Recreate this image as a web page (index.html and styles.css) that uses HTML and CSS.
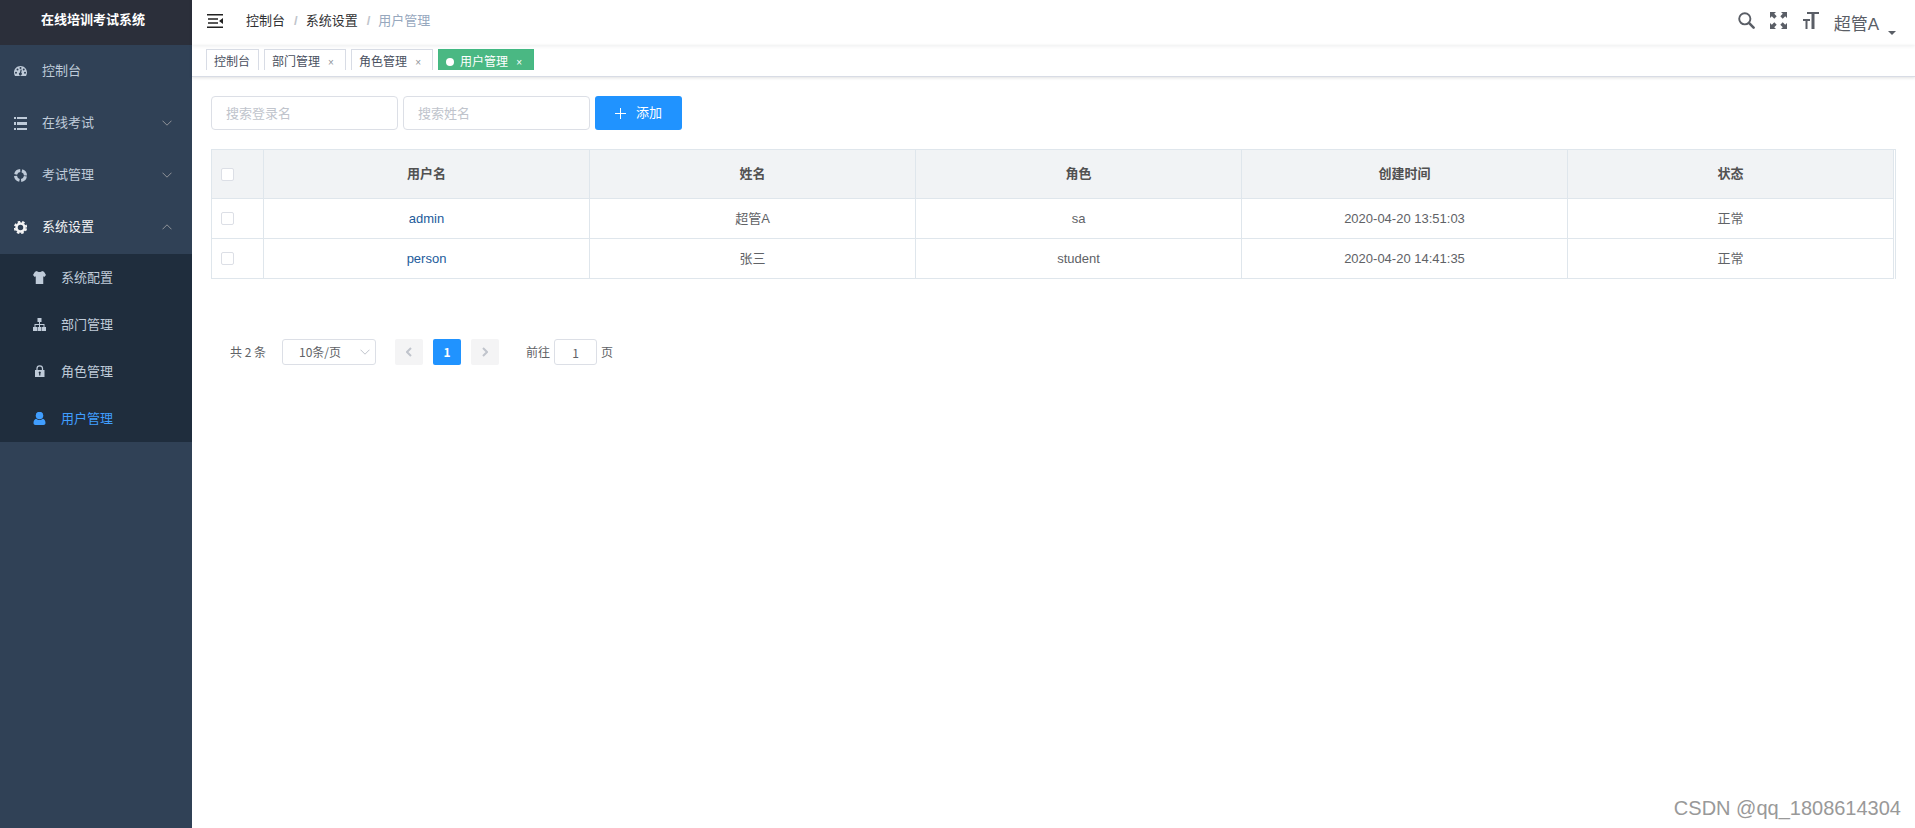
FILE: index.html
```html
<!DOCTYPE html>
<html lang="zh-CN">
<head>
<meta charset="utf-8">
<title>在线培训考试系统</title>
<link rel="stylesheet" href="styles.css">
</head>
<body>
<div class="app">
  <aside class="sidebar">
    <h1 class="logo">在线培训考试系统</h1>
    <nav>
      <ul class="menu">
        <li><a class="menu-item" href="#">
          <svg class="icon" viewBox="0 0 26 26"><path fill="currentColor" fill-rule="evenodd" d="M13 2C5.800 2 0 7.800 0 15c0 2.600.7 5 2 7h22c1.300-2 2-4.400 2-7C26 7.800 20.200 2 13 2zM4 13.500a2 2 0 1 1 0 4 2 2 0 0 1 0-4zM7 7a2 2 0 1 1 0 4 2 2 0 0 1 0-4zM13 4a2 2 0 1 1 0 4 2 2 0 0 1 0-4zM15.500 9.500l-1 6a3 3 0 1 1-2.600-.4l1.400-6zM19.500 7a2 2 0 1 1 0 4 2 2 0 0 1 0-4zM22 13.500a2 2 0 1 1 0 4 2 2 0 0 1 0-4z"/></svg>
          <span>控制台</span></a></li>
        <li><a class="menu-item" href="#">
          <svg class="icon" viewBox="0 0 13 13"><path fill="currentColor" d="M0 0h2v2H0zM3 0h10v2H3zM0 5h2v3H0zM3 5h10v3H3zM0 11h2v2H0zM3 11h10v2H3z"/></svg>
          <span>在线考试</span>
          <svg class="chevron" viewBox="0 0 10 6"><path d="M.5.7 5 5.200 9.500.7"/></svg></a></li>
        <li><a class="menu-item" href="#">
          <svg class="icon" viewBox="0 0 26 26"><circle cx="13" cy="13" r="10" fill="none" stroke="currentColor" stroke-width="6" stroke-dasharray="12.200 3.508" stroke-dashoffset="-1.754"/></svg>
          <span>考试管理</span>
          <svg class="chevron" viewBox="0 0 10 6"><path d="M.5.7 5 5.200 9.500.7"/></svg></a></li>
        <li><a class="menu-item opened" href="#">
          <svg class="icon" viewBox="0 0 26 26"><circle cx="13" cy="13" r="8" fill="none" stroke="currentColor" stroke-width="5"/><circle cx="13" cy="13" r="11.500" fill="none" stroke="currentColor" stroke-width="3.600" stroke-dasharray="5.030 4" stroke-dashoffset="-2"/></svg>
          <span>系统设置</span>
          <svg class="chevron" viewBox="0 0 10 6"><path d="M.5 5.300 5 .8l4.500 4.500"/></svg></a>
          <ul class="submenu">
            <li><a class="sub-item" href="#">
              <svg class="icon" viewBox="0 0 26 26"><path fill="currentColor" d="M8 0c1.500 2.500 8.500 2.500 10 0l4 1.500L26 8l-3.500 4-2-1.500V26h-15V10.500L3.500 12 0 8l4-6.500z"/></svg>
              <span>系统配置</span></a></li>
            <li><a class="sub-item" href="#">
              <svg class="icon" viewBox="0 0 13 13"><path fill="currentColor" d="M4.500 0h4v4H7v2h4.500v3H13v4H9V9h1.500V7H7v2h1.500v4h-4V9H6V7H2.500v2H4v4H0V9h1.500V6H6V4H4.500z"/></svg>
              <span>部门管理</span></a></li>
            <li><a class="sub-item" href="#">
              <svg class="icon" viewBox="0 0 26 26"><path d="M8 12V7a5.500 5.500 0 0 1 11 0v5" fill="none" stroke="currentColor" stroke-width="2.500"/><path fill="currentColor" fill-rule="evenodd" d="M4 10h19v14H4zM13.500 13a2.200 2.200 0 0 0-1.200 4V21h2.400v-4a2.200 2.200 0 0 0-1.200-4z"/></svg>
              <span>角色管理</span></a></li>
            <li><a class="sub-item current" href="#">
              <svg class="icon" viewBox="0 0 26 26"><circle cx="13" cy="7" r="7.500" fill="currentColor"/><path fill="currentColor" d="M6.500 13.500c3.500 3.500 9.500 3.500 13 0C23 14.500 25 18 25 22c0 2.500-1.500 4-4 4H5c-2.500 0-4-1.500-4-4 0-4 2-7.500 5.500-8.500z"/></svg>
              <span>用户管理</span></a></li>
          </ul>
        </li>
      </ul>
    </nav>
  </aside>

  <div class="page">
    <header class="navbar">
      <button class="plain" type="button" aria-label="折叠菜单"><svg class="hamburger" viewBox="0 0 16 14"><path fill="currentColor" d="M0 0h16v1.500H0zM1 4.200h10v1.500H1zM1 8.300h10v1.500H1zM0 12.500h16V14H0zM16 4v6l-4-3z"/></svg></button>
      <nav class="breadcrumb">
        <a href="#">控制台</a><b>/</b><a href="#">系统设置</a><b>/</b><span>用户管理</span>
      </nav>
      <div class="tools">
        <button class="plain" type="button" aria-label="搜索"><svg class="tool" viewBox="0 0 17 17"><circle cx="6.800" cy="6.800" r="5.600" fill="none" stroke="currentColor" stroke-width="1.900"/><path d="m11.200 11.200 4.400 4.400" stroke="currentColor" stroke-width="2.600" stroke-linecap="round"/></svg></button>
        <button class="plain" type="button" aria-label="全屏"><svg class="tool" viewBox="0 0 17 17"><path fill="currentColor" d="M0 0h6L4.200 1.800l2.500 2.500-2.400 2.400-2.500-2.500L0 6zM17 0v6l-1.800-1.800-2.500 2.500-2.400-2.400 2.500-2.500L11 0zM0 17v-6l1.800 1.800 2.500-2.500 2.400 2.400-2.500 2.500L6 17zM17 17h-6l1.800-1.800-2.500-2.500 2.400-2.400 2.500 2.500L17 11z"/></svg></button>
        <button class="plain" type="button" aria-label="字号"><svg class="tool" viewBox="0 0 17 17"><path fill="currentColor" d="M5 0h12v2h-4.500v15H9.500V2H5zM1 7h7v2H5.500v8h-2V9H1z"/></svg></button>
        <button class="plain user" type="button">超管A<svg class="caret" viewBox="0 0 8 4"><path fill="currentColor" d="M0 0h8L4 4z"/></svg></button>
      </div>
    </header>

    <div class="tags">
      <a class="tag" href="#">控制台</a>
      <a class="tag" href="#">部门管理<i>×</i></a>
      <a class="tag" href="#">角色管理<i>×</i></a>
      <a class="tag on" href="#"><span class="dot"></span>用户管理<i>×</i></a>
    </div>

    <main class="content">
      <form class="filters">
        <input class="field" type="text" placeholder="搜索登录名" aria-label="搜索登录名">
        <input class="field" type="text" placeholder="搜索姓名" aria-label="搜索姓名">
        <button class="add" type="button"><svg class="plus" viewBox="0 0 11 11"><path d="M5.500 0v11M0 5.500h11"/></svg>添加</button>
      </form>

      <div class="table-box">
        <table class="users">
          <colgroup><col class="check-col"><col><col><col><col><col></colgroup>
          <thead>
            <tr><th><input class="check" type="checkbox" aria-label="全选"></th><th>用户名</th><th>姓名</th><th>角色</th><th>创建时间</th><th>状态</th></tr>
          </thead>
          <tbody>
            <tr><td><input class="check" type="checkbox" aria-label="选择 admin"></td><td><a href="#">admin</a></td><td>超管A</td><td>sa</td><td>2020-04-20 13:51:03</td><td>正常</td></tr>
            <tr><td><input class="check" type="checkbox" aria-label="选择 person"></td><td><a href="#">person</a></td><td>张三</td><td>student</td><td>2020-04-20 14:41:35</td><td>正常</td></tr>
          </tbody>
        </table>
      </div>

      <div class="pagination">
        <span>共 2 条</span>
        <div class="size-box">
          <select class="size" aria-label="每页条数"><option>10条/页</option></select>
          <svg class="chevron" viewBox="0 0 10 6"><path d="M.5.7 5 5.200 9.500.7"/></svg>
        </div>
        <div class="pager">
          <button type="button" aria-label="上一页" disabled><svg class="arrow" viewBox="0 0 6 10"><path d="M5 1 1 5l4 4"/></svg></button>
          <button class="now" type="button">1</button>
          <button type="button" aria-label="下一页" disabled><svg class="arrow" viewBox="0 0 6 10"><path d="m1 1 4 4-4 4"/></svg></button>
        </div>
        <label class="jump">前往<input type="text" value="1">页</label>
      </div>
    </main>
  </div>
  <div class="watermark">CSDN @qq_1808614304</div>
</div>
</body>
</html>
```
FILE: styles.css
```css
* {
  box-sizing: border-box;
}

body {
  margin: 0;
  background: #fff;
  color: #606266;
  font: 13px/20px "Liberation Sans", "Noto Sans CJK SC", sans-serif;
}

a {
  color: inherit;
  text-decoration: none;
}

ul {
  margin: 0;
  padding: 0;
  list-style: none;
}

button,
input,
select {
  font: inherit;
}

svg {
  display: block;
  flex: none;
}

.app {
  display: flex;
  min-height: 100vh;
}

/* Sidebar */
.sidebar {
  width: 192px;
  flex: none;
  background: #304156;
  color: #bfcbd9;
}

.logo {
  margin: 0;
  padding: 0 6px 5px 0;
  background: #2b2f3a;
  color: #fff;
  font-size: 13px;
  line-height: 40px;
  text-align: center;
}

.menu-item {
  display: flex;
  align-items: center;
  gap: 15px;
  height: 52px;
  padding: 0 20px 0 14px;
}

.menu-item.opened {
  color: #f4f4f5;
}

.icon {
  width: 13px;
  height: 13px;
}

.chevron {
  width: 10px;
  height: 6px;
  margin-left: auto;
  fill: none;
  stroke: #909399;
}

.submenu {
  margin-top: 1px;
  background: #1f2d3d;
  color: #bfcbd9;
}

.sub-item {
  display: flex;
  align-items: center;
  gap: 15px;
  height: 47px;
  padding-left: 33px;
}

.sub-item.current {
  color: #409eff;
}

/* Top bar */
.page {
  flex: 1;
  min-width: 0;
}

.navbar {
  display: flex;
  align-items: center;
  height: 45px;
  padding: 0 19px 4px 15px;
  box-shadow: 0 1px 4px rgba(0, 21, 41, 0.08);
}

.plain {
  padding: 0;
  border: 0;
  background: none;
  color: #5a5e66;
}

.hamburger {
  width: 16px;
  height: 14px;
  color: #222;
}

.breadcrumb {
  display: flex;
  margin-left: 23px;
  color: #303133;
}

.breadcrumb b {
  margin: 0 8px 0 9px;
  color: #c0c4cc;
}

.breadcrumb span {
  color: #97a8be;
}

.tools {
  display: flex;
  align-items: center;
  gap: 15px;
  margin-left: auto;
}

.tool {
  width: 17px;
  height: 17px;
}

.user {
  display: flex;
  align-items: flex-end;
  gap: 9px;
  padding-top: 9px;
  font-size: 17px;
}

.caret {
  width: 8px;
  height: 4px;
}

.tags {
  display: flex;
  gap: 5px;
  height: 32px;
  padding: 4px 14px 0;
  border-bottom: 1px solid #d8dce5;
  box-shadow: 0 1px 3px rgba(0, 0, 0, 0.12);
}

.tag {
  display: flex;
  align-items: center;
  height: 21px;
  padding: 3px 8px 0 7px;
  border: 1px solid #d8dce5;
  border-bottom: 0;
  color: #495060;
  font-size: 12px;
}

.tag i {
  width: 16px;
  margin: 2px -2px 0 3px;
  color: #909399;
  font-size: 10px;
  font-style: normal;
  text-align: center;
}

.tag.on {
  border-color: #42b983;
  background: #4ab883;
  color: #fff;
}

.tag.on i {
  color: #fff;
}

.dot {
  width: 8px;
  height: 8px;
  margin-right: 6px;
  border-radius: 50%;
  background: #fff;
}

/* Content */
.content {
  padding: 19px;
}

.filters {
  display: flex;
  gap: 5px;
  margin-bottom: 19px;
}

.field {
  width: 187px;
  height: 34px;
  padding: 0 14px;
  border: 1px solid #dcdfe6;
  border-radius: 4px;
}

.field::placeholder {
  color: #c0c4cc;
}

.add {
  display: flex;
  align-items: center;
  gap: 10px;
  height: 34px;
  padding: 0 20px;
  border: 0;
  border-radius: 3px;
  background: #2093ff;
  color: #fff;
}

.plus {
  width: 11px;
  height: 11px;
  fill: none;
  stroke: #fff;
}

.table-box {
  padding-right: 1px;
  border: 1px solid #dfe6ec;
  border-bottom: 0;
}

.users {
  width: 100%;
  border-spacing: 0;
  table-layout: fixed;
  text-align: center;
}

.check-col {
  width: 52px;
}

.users th,
.users td {
  height: 40px;
  padding: 0;
  border-right: 1px solid #dfe6ec;
  border-bottom: 1px solid #dfe6ec;
}

.users th {
  height: 49px;
  background: #f1f3f5;
  color: #515151;
}

.users a {
  color: #225b9b;
}

.users th:first-child,
.users td:first-child {
  padding-left: 9px;
  text-align: left;
}

.check {
  display: block;
  width: 13px;
  height: 13px;
  margin: 0;
  appearance: none;
  border: 1px solid #dcdfe6;
  border-radius: 2px;
  background: #fff;
}

.check:checked {
  background: #2093ff;
}

.pagination {
  display: flex;
  align-items: center;
  margin-top: 60px;
  padding-left: 19px;
  font-family: "Noto Sans CJK SC", sans-serif;
  font-size: 12px;
}

.size-box {
  display: grid;
  align-items: center;
  margin: 0 19px 0 16px;
}

.size-box > * {
  grid-area: 1 / 1;
}

.size-box .chevron {
  margin-right: 6px;
  stroke: #c0c4cc;
  pointer-events: none;
}

.size {
  width: 94px;
  height: 26px;
  padding: 0 16px;
  appearance: none;
  border: 1px solid #dcdfe6;
  border-radius: 3px;
  background: #fff;
  color: #606266;
}

.pager {
  display: flex;
  gap: 10px;
}

.pager button {
  display: grid;
  place-items: center;
  width: 28px;
  height: 26px;
  padding: 0;
  border: 0;
  border-radius: 2px;
  background: #f4f4f5;
}

.pager .now {
  background: #2093ff;
  color: #fff;
  font-weight: bold;
}

.arrow {
  width: 6px;
  height: 10px;
  fill: none;
  stroke: #c0c4cc;
  stroke-width: 2;
}

.jump {
  display: flex;
  align-items: center;
  gap: 4px;
  margin-left: 27px;
}

.jump input {
  width: 43px;
  height: 26px;
  padding: 0;
  border: 1px solid #dcdfe6;
  border-radius: 3px;
  color: #606266;
  text-align: center;
}

.watermark {
  position: absolute;
  right: 14px;
  bottom: 5px;
  color: #999;
  font: 20px/30px "Liberation Sans", sans-serif;
}
```
